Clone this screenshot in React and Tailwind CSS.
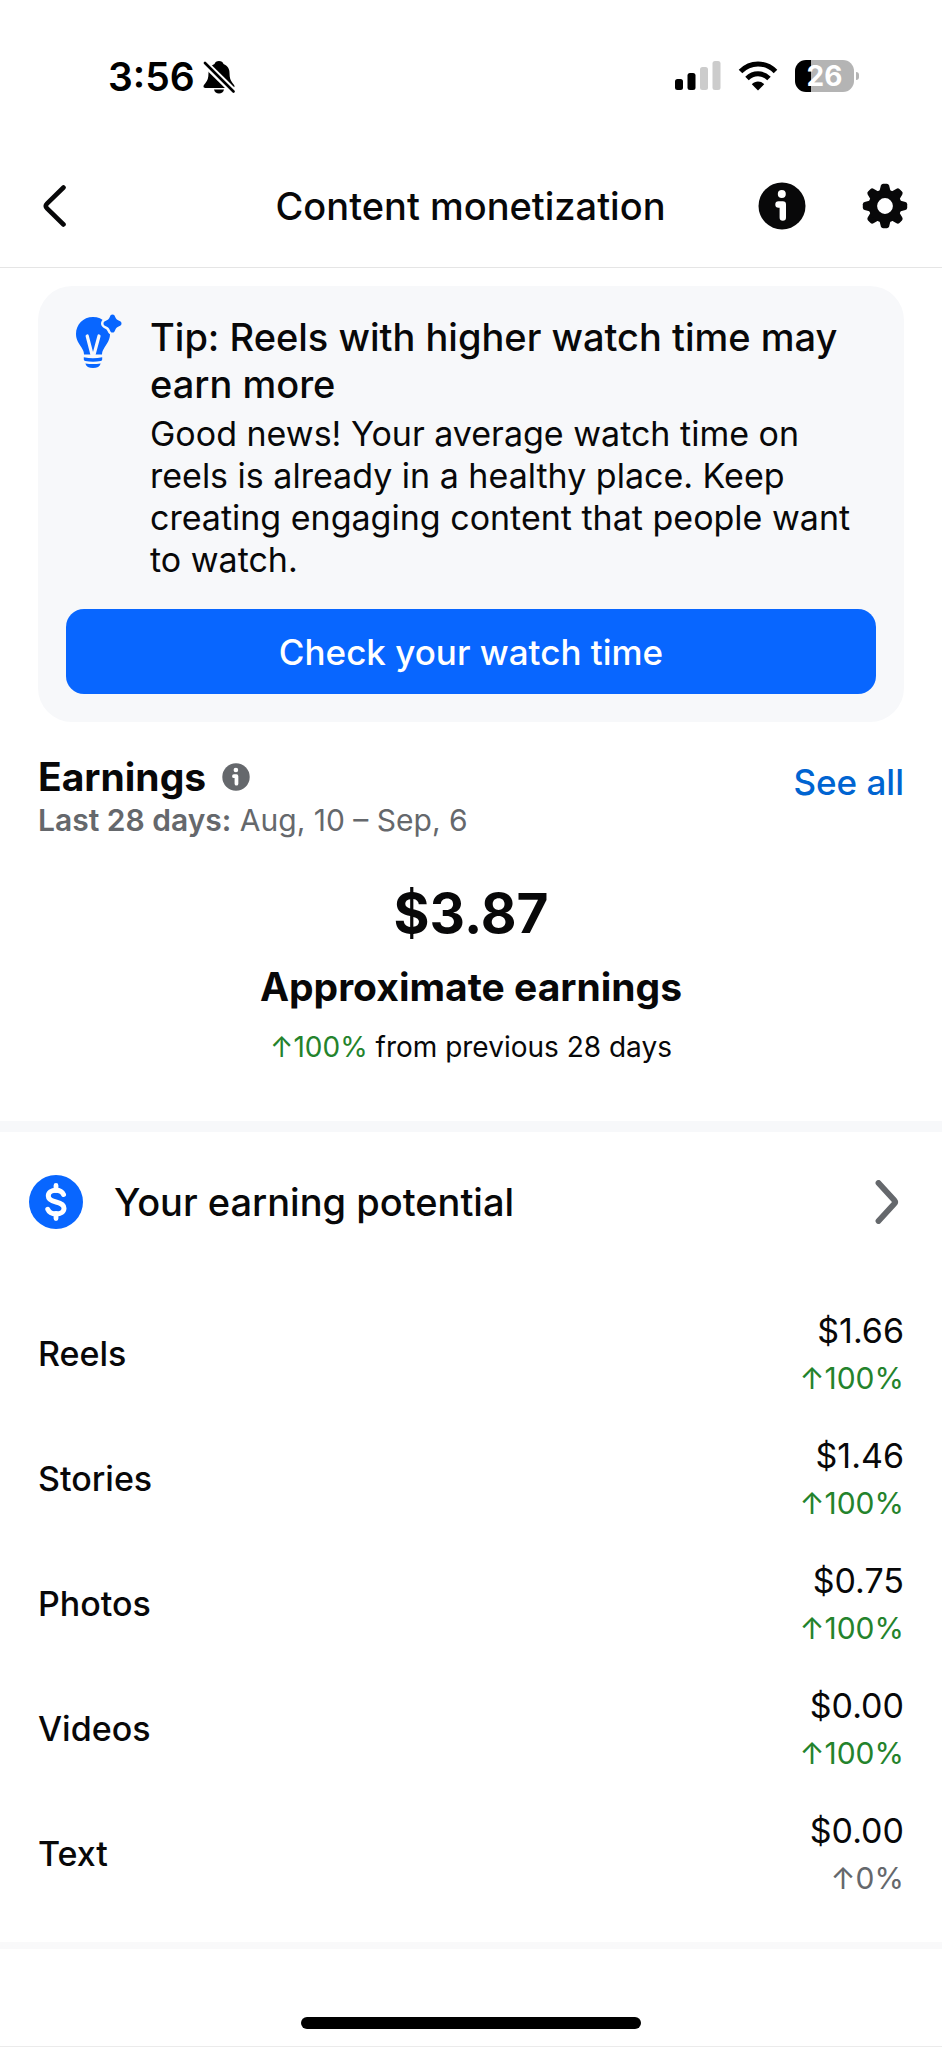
import React from 'react';

const earningsByType = [
  { label: 'Reels', amount: '$1.66', change: '100%', up: true },
  { label: 'Stories', amount: '$1.46', change: '100%', up: true },
  { label: 'Photos', amount: '$0.75', change: '100%', up: true },
  { label: 'Videos', amount: '$0.00', change: '100%', up: true },
  { label: 'Text', amount: '$0.00', change: '0%', up: false },
];

const BellOffIcon = () => (
  <svg width="32" height="34" viewBox="0 0 32 34" aria-hidden="true">
    <path
      d="M16 1c-2.300 0-4 1.300-4.500 3C7.500 5.500 5.500 9 5.500 13c0 5-1 7.500-3 10-1.500 1.800-2 2.500-2 3.600 0 1 .8 1.400 1.800 1.400h27.400c1 0 1.800-.5 1.800-1.400 0-1.100-.5-1.800-2-3.600-2-2.500-3-5-3-10 0-4-2-7.500-6-9C20 2.300 18.300 1 16 1z"
      fill="#000"
    />
    <path d="M11 29.500h10c-.5 2.400-2.500 4-5 4s-4.500-1.600-5-4z" fill="#000" />
    <path d="M1 2.500 31 32" stroke="#fff" strokeWidth="7" />
    <path d="M2 3 30.500 31.500" stroke="#000" strokeWidth="2.600" strokeLinecap="round" />
  </svg>
);

const SignalIcon = () => (
  <svg width="46" height="30" viewBox="0 0 46 30" aria-hidden="true">
    <rect x="0" y="18" width="8" height="11" rx="2.500" fill="#000" />
    <rect x="12.500" y="12" width="8" height="17" rx="2.500" fill="#000" />
    <rect x="25" y="6" width="8" height="23" rx="2.500" fill="#ccc" />
    <rect x="37.500" y="0" width="8" height="29" rx="2.500" fill="#ccc" />
  </svg>
);

const WifiIcon = () => (
  <svg width="40" height="30" viewBox="0 0 40 30" aria-hidden="true">
    <path d="M2.500 10.500C12.500.5 27.500.5 37.500 10.500" fill="none" stroke="#000" strokeWidth="5" />
    <path d="M9 17.500c6.500-6.300 15.500-6.300 22 0" fill="none" stroke="#000" strokeWidth="5" />
    <path d="M20 29.500 13.800 23.200c3.500-3.600 8.900-3.600 12.400 0z" fill="#000" />
  </svg>
);

const BackIcon = () => (
  <svg width="24" height="44" viewBox="0 0 24 44" aria-hidden="true">
    <path d="M20.500 3.500 4 19.700q-2.300 2.300 0 4.600L20.500 40.500" fill="none" stroke="#080809" strokeWidth="4.600" strokeLinecap="round" />
  </svg>
);

const ForwardIcon = () => (
  <svg width="24" height="44" viewBox="0 0 24 44" aria-hidden="true">
    <path d="M3.500 3 19.300 20.200q1.700 1.800 0 3.600L3.500 41" fill="none" stroke="#65686c" strokeWidth="5.800" strokeLinecap="round" />
  </svg>
);

const InfoIcon = ({ className, color }) => (
  <svg className={className} viewBox="0 0 48 48" aria-hidden="true">
    <circle cx="24" cy="24" r="23.500" fill={color} />
    <circle cx="23.800" cy="12" r="4" fill="#fff" />
    <path d="M20.500 22.500h4.300v13" fill="none" stroke="#fff" strokeWidth="6.400" strokeLinecap="round" strokeLinejoin="round" />
  </svg>
);

const teeth = [0, 45, 90, 135, 180, 225, 270, 315];

const GearIcon = () => (
  <svg width="46" height="46" viewBox="0 0 46 46" aria-hidden="true">
    {teeth.map((angle) => (
      <path
        key={angle}
        d="M17 10 18.900 2.600Q19.400.8 21.200.8h3.600q1.800 0 2.300 1.800L29 10z"
        fill="#080809"
        transform={`rotate(${angle} 23 23)`}
      />
    ))}
    <circle cx="23" cy="23" r="12.200" fill="none" stroke="#080809" strokeWidth="8.600" />
  </svg>
);

const BulbIcon = () => (
  <svg width="48" height="56" viewBox="0 0 48 56" aria-hidden="true">
    <path
      d="M18 3C8 3 1 10.600 1 20c0 6 3 9.500 5.500 13.500C8.200 36.200 9 38 9 40.500h18c0-2.500.8-4.300 2.500-7C32 29.500 35 26 35 20 35 10.600 28 3 18 3z"
      fill="#0866ff"
    />
    <path d="M12.200 22 17 40.500M24 22 19 40.500" stroke="#f7f8fa" strokeWidth="3.200" strokeLinecap="round" />
    <path d="M8.800 43.300c6 1.200 12.400 1.200 18.400 0v2.200q0 1.200-1.500 1.500c-5 .9-10.400.9-15.400 0q-1.500-.3-1.500-1.500z" fill="#0866ff" />
    <path d="M10.300 49.500c5 .8 10.400.8 15.400 0-.8 3-3.600 4.500-7.700 4.500s-6.900-1.500-7.700-4.500z" fill="#0866ff" />
    <path
      d="M37.500.5c1.500 0 2 .9 2.600 2.300 1 2.300 1.700 3 4 4 1.500.6 2.400 1.200 2.400 2.700s-.9 2-2.400 2.700c-2.300 1-3 1.700-4 4-.6 1.400-1.100 2.300-2.600 2.300s-2-.9-2.600-2.300c-1-2.300-1.700-3-4-4-1.500-.7-2.400-1.200-2.400-2.700s.9-2.100 2.400-2.700c2.300-1 3-1.700 4-4C35.500 1.400 36 .5 37.500.5z"
      fill="#0866ff"
      stroke="#f7f8fa"
      strokeWidth="5"
      paintOrder="stroke"
    />
  </svg>
);

const DollarIcon = () => (
  <svg width="54" height="54" viewBox="0 0 54 54" aria-hidden="true">
    <circle cx="27" cy="27" r="27" fill="#0866ff" />
    <path d="M27 10.500v5M27 38.500v5" stroke="#fff" strokeWidth="4.800" strokeLinecap="round" />
    <path
      d="M34.500 19.500c-1.200-2.700-4-4.200-7.500-4.200-4.500 0-7.700 2.300-7.700 5.700 0 3.300 2.600 4.800 7.700 6 5.200 1.200 8 2.800 8 6.200 0 3.500-3.300 5.700-8 5.700-3.900 0-7-1.600-8.200-4.500"
      fill="none"
      stroke="#fff"
      strokeWidth="5"
      strokeLinecap="round"
    />
  </svg>
);

const StatusBar = () => (
  <div className="flex h-[145px] items-start justify-between pt-[53px] pr-[83px] pl-[108px]">
    <div className="flex items-center gap-2">
      <span className="text-[39px] leading-[48px] font-semibold text-black">3:56</span>
      <BellOffIcon />
    </div>
    <div className="flex h-[46px] items-center gap-[17px]">
      <SignalIcon />
      <WifiIcon />
      <div className="flex items-center gap-[2px]">
        <div className="flex h-8 w-[59px] items-center justify-center rounded-[11px] bg-linear-to-r from-black from-27% to-[#b4b4b4] to-27% text-[28px] leading-8 font-bold text-white">
          26
        </div>
        <div className="h-2 w-[3px] rounded-r-full bg-[#b4b4b4]" />
      </div>
    </div>
  </div>
);

const Header = () => (
  <header className="grid h-[123px] grid-cols-[1fr_auto_1fr] items-center border-b border-[#e5e5e5] pr-[34px] pl-[43px]">
    <button type="button" aria-label="Back" className="justify-self-start">
      <BackIcon />
    </button>
    <h1 className="pr-[10px] text-[38px] leading-[48px] font-medium">Content monetization</h1>
    <div className="flex items-center gap-[56px] justify-self-end">
      <button type="button" aria-label="About monetization">
        <InfoIcon className="size-12" color="#080809" />
      </button>
      <button type="button" aria-label="Settings">
        <GearIcon />
      </button>
    </div>
  </header>
);

const TipCard = () => (
  <section className="mx-[38px] mt-[18px] rounded-[34px] bg-[#f7f8fa] px-7 py-7" aria-label="Tip">
    <div className="flex gap-[27px] pl-[9px]">
      <div className="shrink-0">
        <BulbIcon />
      </div>
      <div>
        <h2 className="text-[38px] leading-[47px] font-medium">Tip: Reels with higher watch time may earn more</h2>
        <p className="mt-[5px] text-[34px] leading-[42px]">
          Good news! Your average watch time on reels is already in a healthy place. Keep creating engaging content that people want to watch.
        </p>
      </div>
    </div>
    <button type="button" className="mt-7 h-[85px] w-full rounded-[18px] bg-[#0866ff] text-[35px] leading-[42px] font-medium text-white">
      Check your watch time
    </button>
  </section>
);

const Change = ({ value, up }) => (
  <span className={up ? 'text-[#24832c]' : 'text-[#65686c]'}>↑{value}</span>
);

const Earnings = () => (
  <section className="px-[38px] pt-[31px] pb-14">
    <div className="flex items-start justify-between">
      <div>
        <div className="flex items-center gap-4">
          <h2 className="text-[39px] leading-[48px] font-bold">Earnings</h2>
          <button type="button" aria-label="About earnings">
            <InfoIcon className="size-7" color="#65686c" />
          </button>
        </div>
        <p className="mt-px text-[30px] leading-9 text-[#65686c]">
          <span className="font-semibold">Last 28 days:</span> Aug, 10 – Sep, 6
        </p>
      </div>
      <a href="#all" className="mt-2 text-[35px] leading-[42px] font-medium text-[#0064d1]">See all</a>
    </div>
    <div className="mt-[45px] text-center">
      <p className="text-[55px] leading-[60px] font-bold">$3.87</p>
      <p className="mt-5 text-[39px] leading-[48px] font-bold">Approximate earnings</p>
      <p className="mt-[18px] text-[28px] leading-9">
        <Change value="100%" up /> from previous 28 days
      </p>
    </div>
  </section>
);

const EarningPotential = () => (
  <button type="button" className="flex h-[140px] w-full items-center pr-[43px] pl-[29px] text-left">
    <DollarIcon />
    <span className="ml-[31px] flex-1 text-[38px] leading-[48px] font-medium">Your earning potential</span>
    <ForwardIcon />
  </button>
);

const Breakdown = () => (
  <ul className="flex flex-col gap-[31px] px-[38px] pt-[35px] pb-[41px]">
    {earningsByType.map((item) => (
      <li key={item.label} className="flex items-center justify-between">
        <span className="text-[34px] leading-[48px] font-medium">{item.label}</span>
        <div className="text-right">
          <p className="text-[34px] leading-[48px]">{item.amount}</p>
          <p className="text-[30px] leading-[46px]">
            <Change value={item.change} up={item.up} />
          </p>
        </div>
      </li>
    ))}
  </ul>
);

const App = () => {
  return (
    <div className="min-h-screen bg-white font-[Inter,sans-serif] text-[#080809]">
      <StatusBar />
      <Header />
      <main>
        <TipCard />
        <Earnings />
        <div className="h-[11px] bg-[#f7f8fa]" />
        <EarningPotential />
        <Breakdown />
        <div className="h-[7px] bg-[#f9f9fa]" />
      </main>
      <div className="border-b border-[#ebebeb] pt-[68px] pb-[17px]">
        <div className="mx-auto h-3 w-[36%] rounded-full bg-black" />
      </div>
    </div>
  );
};

export default App;
